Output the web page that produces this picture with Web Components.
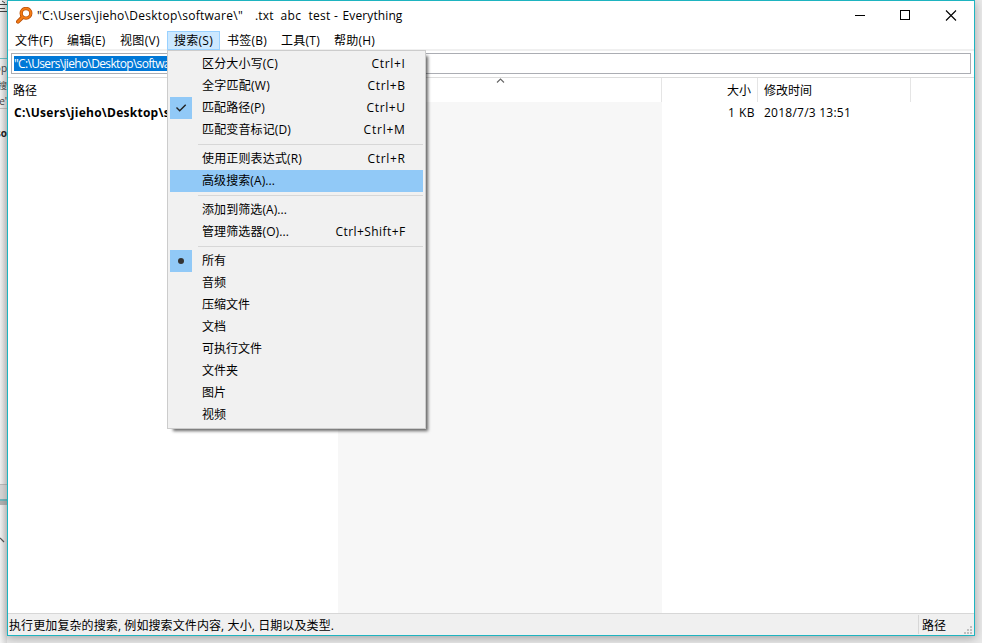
<!DOCTYPE html>
<html lang="zh-CN">
<head>
<meta charset="utf-8">
<title>Everything</title>
<style>
html,body{margin:0;height:100%;overflow:hidden;background:#e9e9e9}
body{font:12px/16px "Open Sans","Noto Sans CJK SC",sans-serif;color:#000}
</style>
</head>
<body>
<everything-app></everything-app>
<script>
const define=(name,html,setup)=>customElements.define(name,class extends HTMLElement{
  connectedCallback(){
    if(this.shadowRoot)return;
    const t=document.createElement('template');
    t.innerHTML=html;
    this.attachShadow({mode:'open'}).append(t.content.cloneNode(true));
    if(setup)setup(this,this.shadowRoot);
  }
});

/* A run of text spread evenly over the width given in "w". */
customElements.define('fit-text',class extends HTMLElement{
  connectedCallback(){
    if(this.shadowRoot)return;
    this.attachShadow({mode:'open'}).innerHTML='<style>:host{display:inline-block;white-space:pre;flex:none}span{display:inline-block;white-space:pre}</style><span></span>';
    const s=this.shadowRoot.querySelector('span');
    s.textContent=this.getAttribute('t');
    const w=+this.getAttribute('w');
    if(!w)return;
    const n=[...s.textContent].length;
    const own=s.getBoundingClientRect().width;
    s.style.letterSpacing=((w-own)/n)+'px';
    this.style.width=w+'px';
  }
});

define('app-logo',`<style>:host{display:block;width:17px;height:17px}svg{display:block}</style>
<svg width="17" height="17" viewBox="0 0 17 17"><g fill="none" stroke-linecap="round"><path d="M6.2 10.5L2 14.7" stroke="#b8500a" stroke-width="4"/><circle cx="10" cy="6.3" r="4.8" stroke="#b8500a" stroke-width="3.3"/><circle cx="10" cy="6.3" r="4.8" stroke="#f57c14" stroke-width="1.9"/><path d="M6.2 10.5L2 14.7" stroke="#f57c14" stroke-width="2.3"/></g></svg>`);

define('window-buttons',`<style>:host{display:flex;height:30px}svg{display:block}</style>
<svg width="137" height="30" fill="none" stroke="#000" shape-rendering="crispEdges"><path d="M18 14.5h10"/><rect x="63.5" y="9.5" width="9" height="9"/><path d="M109 9.5l10 10M119 9.5l-10 10" shape-rendering="auto" stroke-width="1.1"/></svg>`);

define('title-bar',`<style>:host{display:flex;height:30px;box-sizing:border-box}
app-logo{margin:6px 0 0 8px}.t{display:flex;padding:7px 0 0 4px;font-size:12px;flex:1}</style>
<app-logo></app-logo>
<div class="t"><fit-text w="206" t='"C:\\Users\\jieho\\Desktop\\software\\"'></fit-text><fit-text w="12" t="   "></fit-text><fit-text w="25.5" t=".txt  "></fit-text><fit-text w="28" t="abc  "></fit-text><fit-text w="25.5" t="test "></fit-text><fit-text w="8.5" t="- "></fit-text><fit-text w="60" t="Everything"></fit-text></div>
<window-buttons></window-buttons>`);

define('menu-title',`<style>:host{display:flex;box-sizing:border-box;height:19px;padding:2px 0 0 7px}
:host([open]){background:#cce8ff;box-shadow:inset 0 0 0 1px #99d1ff}</style><slot></slot>`,
 h=>{h.style.width=h.getAttribute('width')+'px'});

define('menu-bar',`<style>:host{display:flex;height:18px;border-bottom:2px solid #f0f0f0}</style><slot></slot>`);

define('search-box',`<style>:host{display:block;height:19px;margin:2px 3px 3px;border:1px solid #abadb3;background:#fff}
div{display:inline-block;height:15px;margin:2px 0 0 2px;background:#0078d7;color:#fff;line-height:15px;vertical-align:top;width:174px}</style>
<div><fit-text w="174" t='"C:\\Users\\jieho\\Desktop\\software\\"'></fit-text></div>`);

define('file-list',`<style>
:host{display:grid;grid-template-columns:329px 325px 96px 153px 1fr;grid-template-rows:24px 1fr;border-top:1px solid #dcdcdc;flex:1;min-height:0}
.h{padding-top:5px;border-right:1px solid #e5e5e5;box-sizing:border-box;min-width:0}
.h.first{border-color:transparent;padding-left:5px}.h.name{padding:0 0 0 2px}
.c{padding-top:3px;min-width:0;overflow:hidden}.name.c{background:#f7f7f7;margin-left:1px}
.size{text-align:right}.h.size{padding-right:6px}.c.size{padding-right:3px}
.date{padding-left:6px}.path{font-weight:700;padding-left:6px}
.h.last{border:0}svg{display:block;margin:0 auto}
</style>
<div class="h first"><fit-text w="24" t="路径"></fit-text></div>
<div class="h name"><svg width="9" height="6" fill="none" stroke="#666" stroke-width="1.1"><path d="M1 4.5L4.5 1 8 4.5"/></svg></div>
<div class="h size"><fit-text w="24" t="大小"></fit-text></div>
<div class="h date"><fit-text w="48" t="修改时间"></fit-text></div><div class="h last"></div>
<div class="c path"><fit-text w="205" t="C:\\Users\\jieho\\Desktop\\software"></fit-text></div><div class="c name"></div>
<div class="c size"><fit-text w="27" t="1 KB"></fit-text></div>
<div class="c date"><fit-text w="87" t="2018/7/3 13:51"></fit-text></div><div class="c last"></div>`);

define('status-bar',`<style>:host{display:flex;height:21px;border-top:1px solid #d7d7d7;background:#f0f0f0}
.m{flex:1;padding:4px 0 0 1px}.p{width:56px;box-sizing:border-box;border-left:1px solid #d7d7d7;padding:4px 0 0 3px;margin-top:1px;height:19px;display:flex;justify-content:space-between;line-height:14px}
svg{display:block;align-self:flex-end;margin-right:2px}</style>
<div class="m"><fit-text w="325" t="执行更加复杂的搜索, 例如搜索文件内容, 大小, 日期以及类型."></fit-text></div>
<div class="p"><fit-text w="24" t="路径"></fit-text><svg width="8" height="8" fill="#bfbfbf"><path d="M6 0h2v2H6zM3 3h2v2H3zM6 3h2v2H6zM0 6h2v2H0zM3 6h2v2H3zM6 6h2v2H6z"/></svg></div>`);

define('menu-item',`<style>:host{display:flex;height:22px;align-items:center}
:host([hot]){background:#91c9f7}
.i{width:22px;height:22px;flex:none}:host([check]) .i,:host([radio]) .i{background:#91c9f7}
.l{padding-left:10px;flex:1;display:flex}.k{padding-right:17.4px;display:flex}
svg{display:none}:host([check]) .chk,:host([radio]) .dot{display:block}</style>
<div class="i"><svg class="chk" width="22" height="22" fill="none" stroke="#222" stroke-width="1.4"><path d="M6.5 10.5l3.2 3.2 6-6"/></svg><svg class="dot" width="22" height="22"><circle cx="11" cy="11" r="3" fill="#333"/></svg></div>
<div class="l"><slot></slot></div><div class="k"><slot name="key"></slot></div>`);

define('menu-separator',`<style>:host{display:block;height:7px}div{margin-left:28px;height:3px;border-bottom:1px solid #d7d7d7}</style><div></div>`);

define('popup-menu',`<style>:host{display:block;box-sizing:border-box;width:259px;height:379px;border:1px solid #ccc;padding:2px;background:#f1f1f1;box-shadow:4px 4px 3px -2px rgba(0,0,0,.6)}</style><slot></slot>`);

define('back-window',`<style>:host{display:block;width:7px;height:643px;overflow:hidden;background:linear-gradient(90deg,#f4f4f4,#d9d9d9);color:#444}
.top{height:59px;border-bottom:1px solid #6bbfc5;box-sizing:border-box}
.row{display:flex;justify-content:flex-end;height:18px;font-size:10px;line-height:18px;overflow:hidden;width:7px;white-space:nowrap;box-sizing:border-box}
.ln{border-bottom:1px solid #bbb}.gap{height:341px}.bar{height:17px;background:#d8d8d8;border-top:1px solid #bbb;border-bottom:2px solid #72b9be;box-sizing:border-box}.low{height:4px;background:#b3b3b3}
svg{display:block}</style>
<div class="top"><svg width="7" height="20" fill="none" stroke="#444"><path d="M2 1l3 2M0 4.5h7M0 8.5h5M0 11.5h7"/></svg></div>
<div class="row">op</div><div class="row" style="font-size:9px">搜</div><div class="row ln" style="height:14px;line-height:12px">re'</div><div class="row" style="font-weight:700;height:34px;line-height:48px;color:#222">so</div>
<div class="gap"></div><div class="bar"></div><div class="low"></div>
<svg width="7" height="48" fill="none" stroke="#555" stroke-width="1.2"><path d="M0 33l4 4"/></svg>`);

define('everything-app',`<style>
:host{display:flex;width:982px;height:643px;position:relative}
.win{display:flex;flex-direction:column;box-sizing:border-box;width:968px;height:636px;border:1px solid #1eb4c0;background:#fff;box-shadow:0 2px 9px rgba(0,0,0,.3);z-index:1}
popup-menu{position:absolute;left:167px;top:50px;z-index:2}
</style>
<back-window></back-window>
<div class="win"><title-bar></title-bar><menu-bar id="bar"></menu-bar><search-box></search-box><file-list></file-list><status-bar></status-bar></div>
<popup-menu id="menu"></popup-menu>`,(h,r)=>{
  r.getElementById('bar').innerHTML=[['文件(F)',38,52],['编辑(E)',38.5,53],['视图(V)',40,54],['搜索(S)',39,53],['书签(B)',40,54],['工具(T)',39,53],['帮助(H)',41,55]]
    .map(([t,w,b])=>`<menu-title width="${b}"${t=='搜索(S)'?' open':''}><fit-text w="${w}" t="${t}"></fit-text></menu-title>`).join('');
  const items=[['区分大小写(C)',76,'Ctrl+I',34],['全字匹配(W)',68,'Ctrl+B',38],['匹配路径(P)',63,'Ctrl+U',39,'check'],['匹配变音标记(D)',89,'Ctrl+M',42],0,
    ['使用正则表达式(R)',100,'Ctrl+R',38],['高级搜索(A)...',73,'',0,'hot'],0,['添加到筛选(A)...',85],['管理筛选器(O)...',87,'Ctrl+Shift+F',70],0,
    ['所有',24,'',0,'radio'],['音频',24],['压缩文件',48],['文档',24],['可执行文件',60],['文件夹',36],['图片',24],['视频',24]];
  r.getElementById('menu').innerHTML=items.map(i=>i?`<menu-item ${i[4]||''}><fit-text w="${i[1]}" t="${i[0]}"></fit-text>${i[2]?`<fit-text slot="key" w="${i[3]}" t="${i[2]}"></fit-text>`:''}</menu-item>`:'<menu-separator></menu-separator>').join('');
});
</script>
</body>
</html>
